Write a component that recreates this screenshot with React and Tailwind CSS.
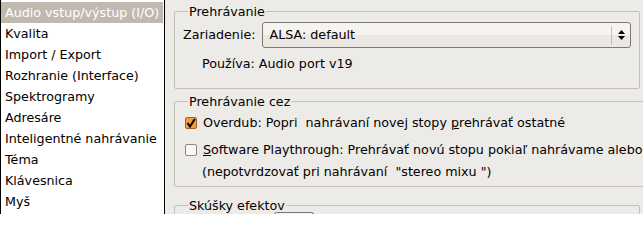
import React from 'react';

const pages = [
    'Audio vstup/výstup (I/O)',
    'Kvalita',
    'Import / Export',
    'Rozhranie (Interface)',
    'Spektrogramy',
    'Adresáre',
    'Inteligentné nahrávanie',
    'Téma',
    'Klávesnica',
    'Myš',
];

const Group = ({ title, className = '', children }) => (
    <fieldset className={`border border-[#c3bfb9] rounded-[2px] px-[8px] ${className}`}>
        <legend className="ml-[5px] px-px leading-[17px]">{title}</legend>
        {children}
    </fieldset>
);

const CheckBox = ({ checked }) => (
    <span
        className={`w-[12px] h-[12px] shrink-0 rounded-[2px] border flex items-center justify-center ${
            checked ? 'bg-[#f29e3f] border-[#a0642a]' : 'bg-[#fbfaf9] border-[#8d8881]'
        }`}
    >
        {checked && (
            <svg width="10" height="10" viewBox="0 0 10 10">
                <path d="M1.5 5 L4 8.5 L8.8 1" fill="none" stroke="#000" strokeWidth="2" />
            </svg>
        )}
    </span>
);

export default function App() {
    return (
        <div className="flex w-[643px] h-[214px] overflow-hidden bg-[#edebe8] text-[12.7px] text-black font-['DejaVu_Sans','Liberation_Sans',sans-serif]">
            {/* Page list */}
            <div className="w-[165px] shrink-0 bg-white border-l border-r border-black pt-[2px]">
                {pages.map((p, i) => (
                    <div
                        key={p}
                        className={`h-[21px] leading-[21px] pl-[4px] whitespace-nowrap ${
                            i === 0 ? 'bg-[#c1b9b0] text-white mr-px' : ''
                        }`}
                    >
                        {p}
                    </div>
                ))}
            </div>

            {/* Settings */}
            <div className="flex-1 min-w-0 pl-[9px] pt-[3px] overflow-hidden">
                <Group title="Prehrávanie" className="w-[466px] pb-[16px]">
                    <div className="flex items-center gap-[6px] mt-[2px]">
                        <span>Zariadenie:</span>
                        <div className="flex-1 h-[26px] flex items-center rounded-[3px] border border-[#7d7872] bg-[linear-gradient(#f6f4f1_50%,#ebe8e4_50%)]">
                            <span className="flex-1 pl-[7px]">ALSA: default</span>
                            <span className="w-px h-[19px] bg-[#c4c0ba]" />
                            <span className="w-[18px] flex flex-col items-center gap-[2px]">
                                <svg width="7" height="4" viewBox="0 0 7 4"><path d="M3.5 0 L7 4 L0 4 Z" fill="#000" /></svg>
                                <svg width="7" height="4" viewBox="0 0 7 4"><path d="M0 0 L7 0 L3.5 4 Z" fill="#000" /></svg>
                            </span>
                        </div>
                    </div>
                    <div className="ml-[19px] mt-[7px] leading-[17px]">Používa: Audio port v19</div>
                </Group>

                <Group title="Prehrávanie cez" className="w-[520px] mt-[4px] pb-[6px]">
                    <div className="flex items-center gap-[6px] ml-[2px] mt-[3px] h-[20px] whitespace-nowrap">
                        <CheckBox checked />
                        <span>
                            Overdub: Popri&nbsp; nahrávaní novej stopy <span className="underline">p</span>rehrávať ostatné
                        </span>
                    </div>
                    <div className="flex items-center gap-[6px] ml-[2px] mt-[7px] h-[20px] whitespace-nowrap">
                        <CheckBox />
                        <span>
                            <span className="underline">S</span>oftware Playthrough: Prehrávať novú stopu pokiaľ nahrávame alebo
                        </span>
                    </div>
                    <div className="ml-[19px] mt-[3px] leading-[17px] whitespace-nowrap">
                        (nepotvrdzovať pri nahrávaní&nbsp; "stereo mixu ")
                    </div>
                </Group>

                <Group title="Skúšky efektov" className="w-[466px] mt-[10px] h-[40px]">
                    <div className="ml-[91px] -mt-[2px] w-[40px] h-[10px] border-t border-l border-r border-[#7d7872] rounded-t-[3px] bg-[#f4f2ef]" />
                </Group>
            </div>
        </div>
    );
}
